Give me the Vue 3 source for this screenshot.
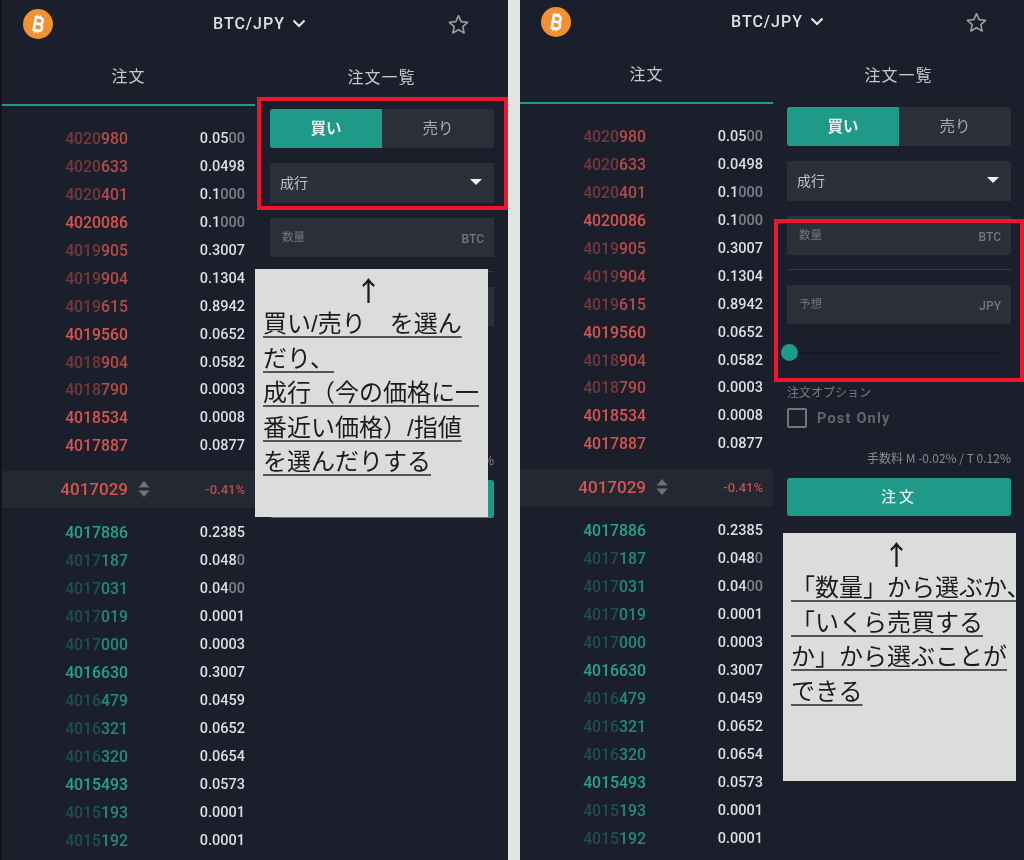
<template>
  <div class="page">
    <section v-for="panel in panels" :key="panel.id" class="panel" :class="panel.id">
      <header class="header">
        <svg class="logo" viewBox="0 0 30 30">
          <circle cx="15" cy="15" r="15" fill="#ee9233" />
          <g fill="none" stroke="#fff" stroke-width="2.6" transform="rotate(10 15 15)">
            <path d="M10.5 8.5h5.5a3 3 0 0 1 0 6.3h-4.2M11.8 14.8h5a3.4 3.4 0 0 1 0 6.7h-6.3M11.8 8.5v13" />
            <path d="M13.2 6v2.5M16.2 6v2.5M13.2 21.5V24M16.2 21.5V24" stroke-width="1.5" />
          </g>
        </svg>
        <div class="pair">
          BTC/JPY
          <svg class="chevron" viewBox="0 0 14 9"><path d="M1.5 1.5 7 7l5.5-5.5" fill="none" stroke="#e6e6e6" stroke-width="2.2" /></svg>
        </div>
        <svg class="star" viewBox="0 0 24 24">
          <path d="M12 2.8l2.8 6.2 6.7.7-5 4.5 1.4 6.6L12 17.4l-5.9 3.4 1.4-6.6-5-4.5 6.7-.7z" fill="none" stroke="#9a9ca2" stroke-width="1.7" stroke-linejoin="round" />
        </svg>
      </header>

      <nav class="tabs">
        <div class="tab active">注文</div>
        <div class="tab">注文一覧</div>
      </nav>

      <div class="body">
        <div class="book">
          <div class="rows">
            <div v-for="row in asks" :key="row.id" class="row ask">
              <span class="price" :class="{ faded: row.dim }"><i class="dim">{{ row.dim }}</i>{{ row.price }}</span>
              <span class="qty">{{ row.qty }}<i class="dim-qty">{{ row.tail }}</i></span>
            </div>
          </div>
          <div class="mid">
            <span class="mid-price">4017029</span>
            <svg class="sort" viewBox="0 0 12 18">
              <path d="M6 1l5.5 6.5H.5z" fill="#6d7077" />
              <path d="M6 17l5.5-6.5H.5z" fill="#6d7077" />
            </svg>
            <span class="change">-0.41%</span>
          </div>
          <div class="rows bids">
            <div v-for="row in bids" :key="row.id" class="row bid">
              <span class="price" :class="{ faded: row.dim }"><i class="dim">{{ row.dim }}</i>{{ row.price }}</span>
              <span class="qty">{{ row.qty }}<i class="dim-qty">{{ row.tail }}</i></span>
            </div>
          </div>
        </div>

        <div class="form">
          <div class="toggle">
            <div class="side buy">買い</div>
            <div class="side">売り</div>
          </div>
          <div class="select">
            <span>成行</span>
            <i class="caret"></i>
          </div>
          <div class="field first">
            <span class="label">数量</span>
            <span class="unit">BTC</span>
          </div>
          <div class="divider"></div>
          <div class="field">
            <span class="label">予想</span>
            <span class="unit">JPY</span>
          </div>
          <div class="slider"><i class="thumb"></i></div>
          <div class="option-title">注文オプション</div>
          <label class="check">
            <i class="box"></i>
            <span>Post Only</span>
          </label>
          <div class="fee">手数料 M -0.02% / T 0.12%</div>
          <button class="submit">注文</button>
        </div>
      </div>

      <div class="frame"></div>
      <div class="note">
        <div class="arrow">↑</div>
        <p v-for="line in panel.note" :key="line"><u>{{ line }}</u></p>
      </div>
    </section>
  </div>
</template>

<script setup>
const panels = [
  {
    id: "left",
    note: ["買い/売り　を選ん", "だり、", "成行（今の価格に一", "番近い価格）/指値", "を選んだりする"],
  },
  {
    id: "right",
    note: ["「数量」から選ぶか、", "「いくら売買する", "か」から選ぶことが", "できる"],
  },
];

function toRows(list) {
  return list.map(([dim, price, qty, tail], id) => ({ id, dim, price, qty, tail }));
}

const asks = toRows([
  ["4020", "980", "0.05", "00"],
  ["4020", "633", "0.0498", ""],
  ["4020", "401", "0.1", "000"],
  ["", "4020086", "0.1", "000"],
  ["4019", "905", "0.3007", ""],
  ["4019", "904", "0.1304", ""],
  ["4019", "615", "0.8942", ""],
  ["", "4019560", "0.0652", ""],
  ["4018", "904", "0.0582", ""],
  ["4018", "790", "0.0003", ""],
  ["", "4018534", "0.0008", ""],
  ["", "4017887", "0.0877", ""],
]);

const bids = toRows([
  ["", "4017886", "0.2385", ""],
  ["4017", "187", "0.048", "0"],
  ["4017", "031", "0.04", "00"],
  ["4017", "019", "0.0001", ""],
  ["4017", "000", "0.0003", ""],
  ["", "4016630", "0.3007", ""],
  ["4016", "479", "0.0459", ""],
  ["4016", "321", "0.0652", ""],
  ["4016", "320", "0.0654", ""],
  ["", "4015493", "0.0573", ""],
  ["4015", "193", "0.0001", ""],
  ["4015", "192", "0.0001", ""],
]);
</script>

<style scoped>
.page {
  display: flex;
  gap: 12px;
  width: 1024px;
  height: 860px;
  overflow: hidden;
  background: #e4e4e4;
  font-family: "Noto Sans CJK JP", Roboto, sans-serif;
}
.panel {
  position: relative;
  flex: 0 0 504px;
  height: 860px;
  overflow: hidden;
  background: #1a1f2b;
  filter: blur(0.55px);
}
.panel.left {
  flex-basis: 506px;
  padding-top: 2px;
  border-left: 2px solid #10131a;
}

.header {
  display: flex;
  align-items: center;
  height: 44px;
  padding-left: 21px;
}
.logo {
  width: 30px;
  height: 30px;
}
.pair {
  display: flex;
  align-items: center;
  gap: 7px;
  width: 106px;
  margin-left: 160px;
  padding-bottom: 1px;
  font: 500 16px Roboto, sans-serif;
  letter-spacing: 1px;
  color: #e0e0e0;
}
.chevron {
  width: 14px;
  height: 9px;
}
.star {
  width: 23px;
  height: 23px;
  margin: 0 0 -1px 128px;
}

.tabs {
  display: grid;
  grid-template-columns: 253px 1fr;
  height: 60px;
}
.tab {
  display: flex;
  align-items: center;
  justify-content: center;
  font-size: 16px;
  letter-spacing: 1px;
  color: #c6c7ca;
}
.tab.active {
  border-bottom: 2px solid #209a88;
}

.body {
  display: flex;
}
.book {
  flex: 0 0 253px;
  padding-top: 19px;
}
.row {
  display: flex;
  justify-content: space-between;
  align-items: center;
  height: 27.9px;
  padding: 0 10px 0 0;
  font-family: Roboto, sans-serif;
}
.bid {
  height: 28px;
}
.price {
  width: 126px;
  text-align: right;
  font-size: 15.8px;
  font-weight: 500;
}
.price.faded {
  opacity: 0.82;
}
.ask .price {
  color: #d9544f;
}
.bid .price {
  color: #27a08d;
}
.dim {
  font-style: normal;
  opacity: 0.45;
}
.ask .dim {
  opacity: 0.58;
}
.qty {
  font-size: 14.5px;
  font-weight: 500;
  color: #dedfe1;
}
.dim-qty {
  font-style: normal;
  opacity: 0.5;
}
.mid {
  display: flex;
  align-items: center;
  height: 37px;
  margin-top: 11px;
  padding-right: 10px;
  background: #232833;
  font-family: Roboto, sans-serif;
}
.mid-price {
  width: 126px;
  text-align: right;
  font-size: 17px;
  font-weight: 500;
  color: #d9544f;
}
.sort {
  width: 12px;
  height: 18px;
  margin-left: 10px;
}
.change {
  margin-left: auto;
  font-size: 13px;
  font-weight: 500;
  color: #c94a47;
}
.bids {
  margin-top: 11px;
}

.form {
  flex: 0 0 224px;
  margin-left: 14px;
  padding-top: 3px;
}
.left .form {
  margin-left: 15px;
}
.toggle {
  display: grid;
  grid-template-columns: 1fr 1fr;
  height: 39px;
  overflow: hidden;
  border-radius: 3px;
  background: #2b3038;
}
.side {
  display: flex;
  align-items: center;
  justify-content: center;
  padding-bottom: 3px;
  font-size: 15.5px;
  color: #a9abae;
}
.side.buy {
  background: #209a88;
  font-weight: 700;
  color: #e8efee;
}
.select {
  display: flex;
  align-items: center;
  justify-content: space-between;
  height: 40px;
  margin-top: 15px;
  padding: 0 12px 2px 10px;
  box-sizing: border-box;
  background: #2b3038;
  font-size: 14px;
  color: #c2c3c6;
}
.caret {
  width: 0;
  height: 0;
  border: 6px solid transparent;
  border-top: 6px solid #f0f0f0;
  border-bottom: 0;
}
.field {
  position: relative;
  height: 39px;
  margin-top: 15px;
  background: #2b3038;
  font-size: 11.5px;
  color: #74777c;
}
.label {
  position: absolute;
  left: 12px;
  top: 9px;
  line-height: 18px;
}
.unit {
  position: absolute;
  right: 10px;
  top: 12px;
  line-height: 18px;
  font-family: Roboto, sans-serif;
  font-size: 12px;
  font-weight: 500;
}
.divider {
  height: 1px;
  margin-top: 14px;
  background: #363a43;
}
.slider {
  position: relative;
  height: 2px;
  margin: 28px 9px 0 8px;
  background: #141720;
}
.thumb {
  position: absolute;
  left: -14px;
  top: -8px;
  width: 17px;
  height: 17px;
  border-radius: 50%;
  background: #209a88;
}
.option-title {
  margin-top: 29px;
  font-size: 12px;
  line-height: 18px;
  color: #797c81;
}
.check {
  display: flex;
  align-items: center;
  gap: 10px;
  height: 22px;
  margin-top: 6px;
  font: 700 14.5px Roboto, sans-serif;
  letter-spacing: 1.2px;
  color: #63666c;
}
.box {
  box-sizing: border-box;
  width: 20px;
  height: 20px;
  border: 2px solid #74767b;
  border-radius: 2px;
}
.fee {
  margin-top: 20px;
  text-align: right;
  font-size: 12px;
  line-height: 18px;
  color: #888a8f;
}
.submit {
  display: block;
  width: 100%;
  height: 38px;
  margin-top: 11px;
  padding: 0 0 3px;
  border: 0;
  border-radius: 3px;
  background: #209a88;
  font-family: inherit;
  font-size: 15px;
  font-weight: 500;
  letter-spacing: 3px;
  color: #e4eeec;
}

.frame {
  position: absolute;
  box-sizing: border-box;
  border: 4px solid #f0142f;
}
.left .frame {
  left: 255px;
  top: 97px;
  width: 251px;
  height: 113px;
}
.right .frame {
  left: 254px;
  top: 219px;
  width: 250px;
  height: 163px;
}

.note {
  position: absolute;
  box-sizing: border-box;
  overflow: hidden;
  width: 233px;
  height: 248px;
  padding: 6px 0 0 8px;
  background: #dcdcdc;
  font-family: "Liberation Sans", "Noto Sans CJK JP", sans-serif;
  font-size: 24px;
  line-height: 34.6px;
  color: #1c1c1c;
}
.left .note {
  left: 253px;
  top: 269px;
}
.right .note {
  left: 263px;
  top: 533px;
}
.arrow {
  height: 32px;
  padding-right: 14px;
  text-align: center;
  font-family: "Noto Sans CJK JP", sans-serif;
  font-size: 27px;
  font-weight: 500;
  line-height: 30px;
}
.note p {
  margin: 0;
  white-space: nowrap;
}
.note u {
  text-decoration-color: #555;
  text-decoration-thickness: 2px;
  text-underline-offset: 4px;
}
</style>
